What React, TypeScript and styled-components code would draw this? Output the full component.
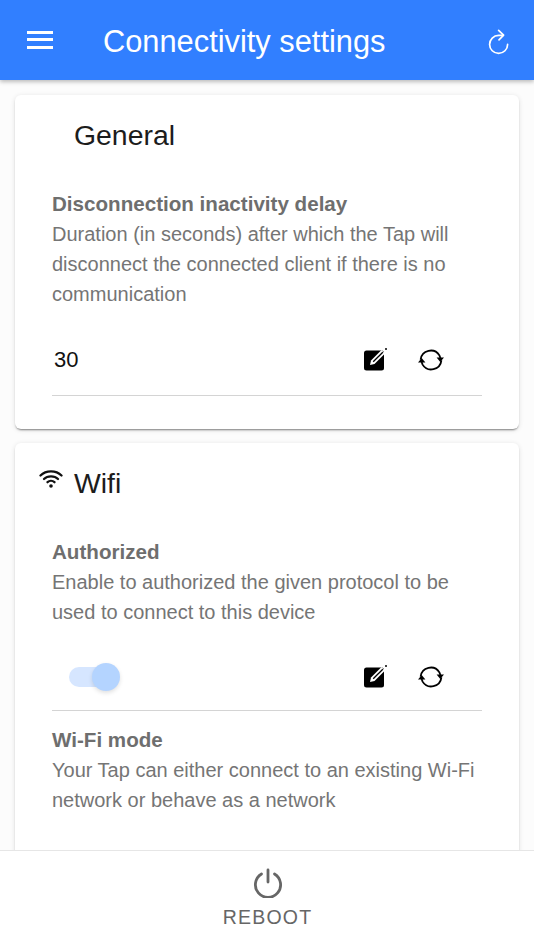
import React from 'react';
import styled, { createGlobalStyle } from 'styled-components';

const GlobalStyle = createGlobalStyle`
  html, body {
    margin: 0;
    padding: 0;
    background: #fcfcfc;
    font-family: 'Liberation Sans', Arial, sans-serif;
  }
  * { box-sizing: border-box; }
`;

const EditIcon = () => (
  <svg width="26" height="26" viewBox="0 0 26 26">
    <rect x="1" y="3.5" width="20" height="20" rx="2.5" fill="#000" />
    <path d="M7 18 L8 13.5 L18.5 3 L22 6.5 L11.5 17 Z" fill="#fff" />
    <path d="M10.2 14.8 L19.8 5.2" stroke="#000" strokeWidth="1.3" />
    <circle cx="23" cy="2" r="1" fill="#000" />
  </svg>
);

const SyncIcon = () => (
  <svg width="28" height="28" viewBox="0 0 28 28" fill="none">
    <path d="M3.6 13.6 A10.2 10.2 0 0 1 22.4 9.4 L23.4 12" stroke="#000" strokeWidth="1.8" />
    <path d="M24.4 14.4 A10.2 10.2 0 0 1 5.6 18.6 L4.6 16" stroke="#000" strokeWidth="1.8" />
    <path d="M19.6 11.6 L27 11.6 L23.3 16 Z" fill="#000" />
    <path d="M1 16.4 L8.4 16.4 L4.7 12 Z" fill="#000" />
  </svg>
);

const WifiIcon = () => (
  <svg width="24" height="20" viewBox="0 0 24 20" fill="none" stroke="#111" strokeWidth="2.3" strokeLinecap="round">
    <path d="M1.5 6.5 C7 1 17 1 22.5 6.5" />
    <path d="M5 10 C8.5 6.5 15.5 6.5 19 10" />
    <path d="M8.5 13.2 C10.5 11.4 13.5 11.4 15.5 13.2" />
    <circle cx="12" cy="17" r="1.8" fill="#111" stroke="none" />
  </svg>
);

const PowerIcon = () => (
  <svg width="30" height="30" viewBox="0 0 30 30" fill="none" stroke="#666" strokeWidth="2.8" strokeLinecap="round">
    <path d="M15 2 L15 14" />
    <path d="M8.5 6 A12.6 12.6 0 1 0 21.5 6" />
  </svg>
);

const RefreshIcon = () => (
  <svg width="21" height="26" viewBox="0 0 21 26" fill="none" stroke="#fff" strokeWidth="1.7" strokeLinecap="round" strokeLinejoin="round">
    <path d="M19.6 15.4 A9 9 0 1 1 10.6 6.4 L15 6.4" />
    <path d="M10.6 1.4 L15.6 6.2 L11 10.8" />
  </svg>
);

const ActionIcons = () => (
  <Actions>
    <EditIcon />
    <SyncIcon />
  </Actions>
);

export default function App() {
  return (
    <Screen>
      <GlobalStyle />
      <AppBar>
        <Burger>
          <span />
          <span />
          <span />
        </Burger>
        <AppTitle>Connectivity settings</AppTitle>
        <RefreshIcon />
      </AppBar>
      <Content>
        <Card>
          <CardHeader>
            <IconSlot />
            <CardTitle>General</CardTitle>
          </CardHeader>
          <Setting>
            <SettingName>Disconnection inactivity delay</SettingName>
            <SettingText>
              Duration (in seconds) after which the Tap will disconnect the connected client if there is no
              communication
            </SettingText>
            <ValueRow>
              <Value>30</Value>
              <ActionIcons />
            </ValueRow>
          </Setting>
        </Card>
        <Card>
          <CardHeader>
            <IconSlot>
              <WifiIcon />
            </IconSlot>
            <CardTitle>Wifi</CardTitle>
          </CardHeader>
          <Setting>
            <SettingName>Authorized</SettingName>
            <SettingText>Enable to authorized the given protocol to be used to connect to this device</SettingText>
            <ValueRow $compact>
              <Switch>
                <SwitchThumb />
              </Switch>
              <ActionIcons />
            </ValueRow>
          </Setting>
          <NextSetting>
            <SettingName>Wi-Fi mode</SettingName>
            <SettingText>Your Tap can either connect to an existing Wi-Fi network or behave as a network</SettingText>
          </NextSetting>
        </Card>
      </Content>
      <BottomBar>
        <PowerIcon />
        <RebootLabel>REBOOT</RebootLabel>
      </BottomBar>
    </Screen>
  );
}

const Screen = styled.div`
  position: relative;
  width: 534px;
  height: 950px;
  overflow: hidden;
  background: #fcfcfc;
`;

const AppBar = styled.header`
  position: relative;
  z-index: 2;
  display: flex;
  align-items: center;
  height: 80px;
  padding: 3px 25px 0 27px;
  background: #317fff;
  color: #fff;
  box-shadow: 0 2px 4px rgba(0, 0, 0, 0.25);
`;

const Burger = styled.div`
  display: flex;
  flex-direction: column;
  justify-content: space-between;
  width: 26px;
  height: 18px;
  margin-top: -4px;
  span {
    display: block;
    height: 3px;
    background: #fff;
  }
`;

const AppTitle = styled.h1`
  flex: 1;
  margin: 0 0 0 50px;
  font-size: 30.8px;
  font-weight: 400;
`;

const Content = styled.main`
  display: flex;
  flex-direction: column;
  gap: 14px;
  padding: 15px 15px 0;
`;

const Card = styled.section`
  padding: 20px 37px 0;
  background: #fff;
  border-radius: 6px;
  box-shadow: 0 2px 2px -1px rgba(0, 0, 0, 0.45), 0 1px 5px rgba(0, 0, 0, 0.12);
`;

const CardHeader = styled.div`
  display: flex;
  align-items: center;
  height: 41px;
  margin-left: -13px;
  gap: 11px;
`;

const IconSlot = styled.div`
  display: flex;
  width: 24px;
  margin-top: -10px;
`;

const CardTitle = styled.h2`
  margin: 0;
  font-size: 28.4px;
  font-weight: 400;
  color: #1c1c1c;
`;

const Setting = styled.div`
  margin-top: 33px;
`;

const NextSetting = styled.div`
  margin-top: 14px;
  padding-bottom: 80px;
`;

const SettingName = styled.div`
  font-size: 20.6px;
  font-weight: 700;
  line-height: 30px;
  color: #6e6e6e;
`;

const SettingText = styled.div`
  font-size: 20px;
  line-height: 30px;
  color: #757575;
`;

const ValueRow = styled.div<{ $compact?: boolean }>`
  display: flex;
  align-items: center;
  justify-content: space-between;
  height: ${(p) => (p.$compact ? '68px' : '72px')};
  margin-top: ${(p) => (p.$compact ? '16px' : '15px')};
  margin-bottom: ${(p) => (p.$compact ? '0' : '33px')};
  padding: 0 37px 0 2px;
  border-bottom: 1px solid #d4d4d4;
`;

const Value = styled.span`
  font-size: 22px;
  color: #111;
`;

const Actions = styled.div`
  display: flex;
  align-items: center;
  gap: 28px;
`;

const Switch = styled.div`
  position: relative;
  width: 46px;
  height: 20px;
  margin-left: 15px;
  border-radius: 10px;
  background: #d6e6ff;
`;

const SwitchThumb = styled.div`
  position: absolute;
  top: -4px;
  right: -5px;
  width: 28px;
  height: 28px;
  border-radius: 50%;
  background: #b4d4ff;
  box-shadow: 0 2px 4px rgba(0, 0, 0, 0.12);
`;

const BottomBar = styled.footer`
  position: absolute;
  left: 0;
  right: 0;
  bottom: 0;
  display: flex;
  flex-direction: column;
  align-items: center;
  height: 100px;
  padding: 17px 0 0 1px;
  background: #fff;
  border-top: 1px solid #e6e6e6;
`;

const RebootLabel = styled.div`
  margin-top: 8px;
  font-size: 19.5px;
  letter-spacing: 1.2px;
  color: #666;
`;
